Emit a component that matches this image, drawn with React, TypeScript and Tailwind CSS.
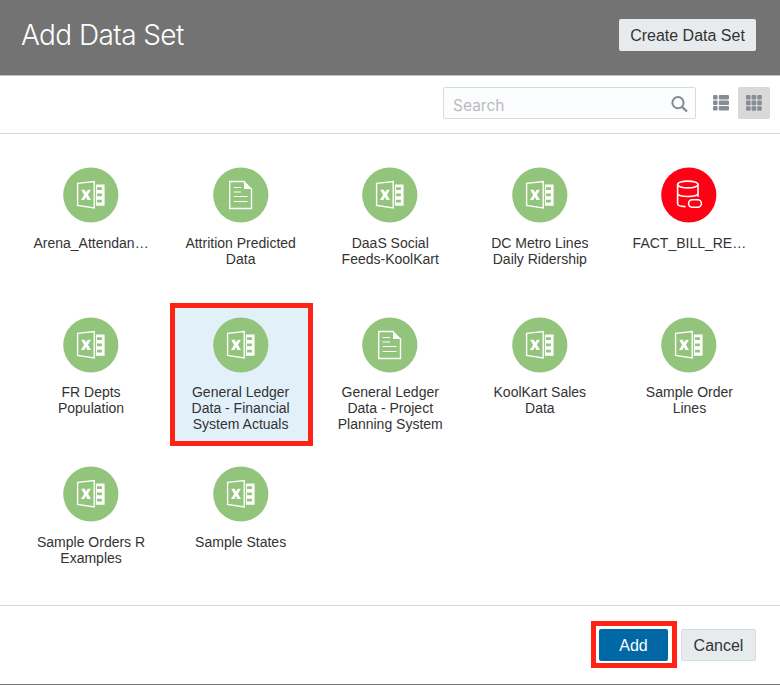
type Kind = "excel" | "doc" | "db";

interface DataSet {
  kind: Kind;
  lines: string[];
  selected?: boolean;
}

const dataSets: DataSet[] = [
  { kind: "excel", lines: ["Arena_Attendan…"] },
  { kind: "doc", lines: ["Attrition Predicted", "Data"] },
  { kind: "excel", lines: ["DaaS Social", "Feeds-KoolKart"] },
  { kind: "excel", lines: ["DC Metro Lines", "Daily Ridership"] },
  { kind: "db", lines: ["FACT_BILL_RE…"] },
  { kind: "excel", lines: ["FR Depts", "Population"] },
  { kind: "excel", lines: ["General Ledger", "Data - Financial", "System Actuals"], selected: true },
  { kind: "doc", lines: ["General Ledger", "Data - Project", "Planning System"] },
  { kind: "excel", lines: ["KoolKart Sales", "Data"] },
  { kind: "excel", lines: ["Sample Order", "Lines"] },
  { kind: "excel", lines: ["Sample Orders R", "Examples"] },
  { kind: "excel", lines: ["Sample States"] },
];

function DataSetIcon({ kind }: { kind: Kind }) {
  return (
    <svg width="56" height="56" viewBox="0 0 56 56" fill="none" className="block">
      <circle cx="27.8" cy="28" r="27.6" fill={kind === "db" ? "#ff0014" : "#92c47b"} />
      {kind === "excel" && (
        <>
          <path d="M14.6 16.4 31.2 14.6V41L14.6 38.4Z" stroke="#fff" strokeWidth="1.4" />
          <path d="M18.2 22.8h3.6l1.4 2.8 1.5-2.8h3.2l-2.9 5 3 5.2h-3.6l-1.5-3-1.6 3h-3.3l3.1-5.1Z" fill="#fff" />
          <path
            fillRule="evenodd"
            d="M32.9 17.6H41.6V38.8H32.9ZM34 20.3v2.7h4.9v-2.7ZM34 26.5v2.7h4.9v-2.7ZM34 32.7v2.7h4.9v-2.7Z"
            fill="#fff"
          />
        </>
      )}
      {kind === "doc" && (
        <>
          <path d="M31.5 14.5H16.7V41.5H38.5V21.5" stroke="#fff" strokeWidth="1.4" />
          <path d="M31 13.8 39.2 22H31Z" fill="#fff" />
          <path d="M20.8 20.5h7.2M20.8 25h7.2M20.8 29.5h13.7M20.8 34.5h13.7" stroke="#fff" strokeWidth="1.2" />
        </>
      )}
      {kind === "db" && (
        <g stroke="#fff" strokeWidth="1.6" strokeLinecap="round">
          <ellipse cx="26.8" cy="17.5" rx="10.2" ry="3.4" />
          <path d="M16.6 17.5V37c0 1.5 3 2.4 7.4 2.6M37 17.5V29.3M16.6 26.3c0 4.2 20.4 4.2 20.4 0" />
          <rect x="27.6" y="32.7" width="12.8" height="7.6" rx="3.7" />
        </g>
      )}
    </svg>
  );
}

function Tile({ item }: { item: DataSet }) {
  const frame = item.selected
    ? "border-[5px] border-[#ff2316] bg-[#e2f0fa]"
    : "border-[5px] border-transparent";
  return (
    <div className="flex justify-center pt-px pl-[2.2px]">
      <div className={`flex h-[143px] w-[143px] shrink-0 flex-col items-center pt-[9px] pr-[1.7px] ${frame}`}>
        <DataSetIcon kind={item.kind} />
        <div className="mt-[11.5px] text-center text-[14px] leading-4 whitespace-nowrap text-[#333]">
          {item.lines.map((line) => (
            <div key={line}>{line}</div>
          ))}
        </div>
      </div>
    </div>
  );
}

function ListIcon() {
  return (
    <svg width="16" height="16" viewBox="0 0 16 16" fill="#878d92">
      {[0, 5.5, 11].map((y) => (
        <g key={y}>
          <rect x="0" y={y} width="4.6" height="4.6" rx="1.1" />
          <rect x="5.8" y={y} width="10.2" height="4.6" rx="1.1" />
        </g>
      ))}
    </svg>
  );
}

function GridIcon() {
  return (
    <svg width="16" height="16" viewBox="0 0 16 16" fill="#878d92">
      {[0, 5.6, 11.2].map((y) =>
        [0, 5.6, 11.2].map((x) => <rect key={`${x}-${y}`} x={x} y={y} width="4.6" height="4.6" rx="1" />),
      )}
    </svg>
  );
}

export default function App() {
  return (
    <div className="flex h-[685px] w-[780px] flex-col overflow-hidden border-b border-[#777] bg-white font-['Liberation_Sans',Arial,sans-serif]">
      <header className="flex h-[76px] shrink-0 justify-between border-b border-[#bdc3c9] bg-[#737373] pr-6 pl-[21px]">
        <h1 className="mt-[17px] font-['Inter',sans-serif] text-[28px] leading-9 font-light tracking-[-0.6px] text-white">
          Add Data Set
        </h1>
        <button className="mt-[19px] h-8 w-[137px] rounded-xs bg-[#e8ebee] pt-0.5 text-[16px] whitespace-nowrap text-[#333]">
          Create Data Set
        </button>
      </header>

      <div className="flex h-[58px] shrink-0 justify-end border-b border-[#d9d9d9] pt-[11px] pr-[10px]">
        <div className="flex h-8 w-[253px] items-center justify-between rounded-xs border border-[#d2dde2] bg-[#fcfdfe] pr-[7px] pl-[9px]">
          <span className="mt-[5px] font-['Inter',sans-serif] text-[15.5px] leading-5 text-[#bbb]">Search</span>
          <svg width="17" height="17" viewBox="0 0 17 17" fill="none" stroke="#858b90" className="mt-0.5">
            <circle cx="7" cy="6.7" r="5.6" strokeWidth="2" />
            <path d="m11 10.8 5 4.7" strokeWidth="2.4" />
          </svg>
        </div>
        <button className="ml-[9px] flex h-8 w-8 items-center justify-center">
          <ListIcon />
        </button>
        <button className="ml-px flex h-8 w-8 items-center justify-center rounded-xs bg-[#d9d9d9]">
          <GridIcon />
        </button>
      </div>

      <main className="grid h-[471px] shrink-0 auto-rows-[149.6px] grid-cols-[repeat(5,149.6px)] content-start pt-[18.2px] pl-4">
        {dataSets.map((item) => (
          <Tile key={item.lines.join(" ")} item={item} />
        ))}
      </main>

      <footer className="flex grow border-t border-[#d9d9d9] pt-[15px] pl-[591px]">
        <div className="flex h-[47px] w-[86px] border-[5px] border-[#ff2316] pt-[3px] pl-[3px]">
          <button className="h-8 w-[69px] rounded-xs bg-[#0069a5] pt-0.5 text-[16px] text-white">Add</button>
        </div>
        <button className="mt-2 ml-1 h-8 w-[75px] rounded-xs border border-[#d3dde2] bg-[#e8ebee] pt-0.5 text-[16px] text-[#333]">
          Cancel
        </button>
      </footer>
    </div>
  );
}
